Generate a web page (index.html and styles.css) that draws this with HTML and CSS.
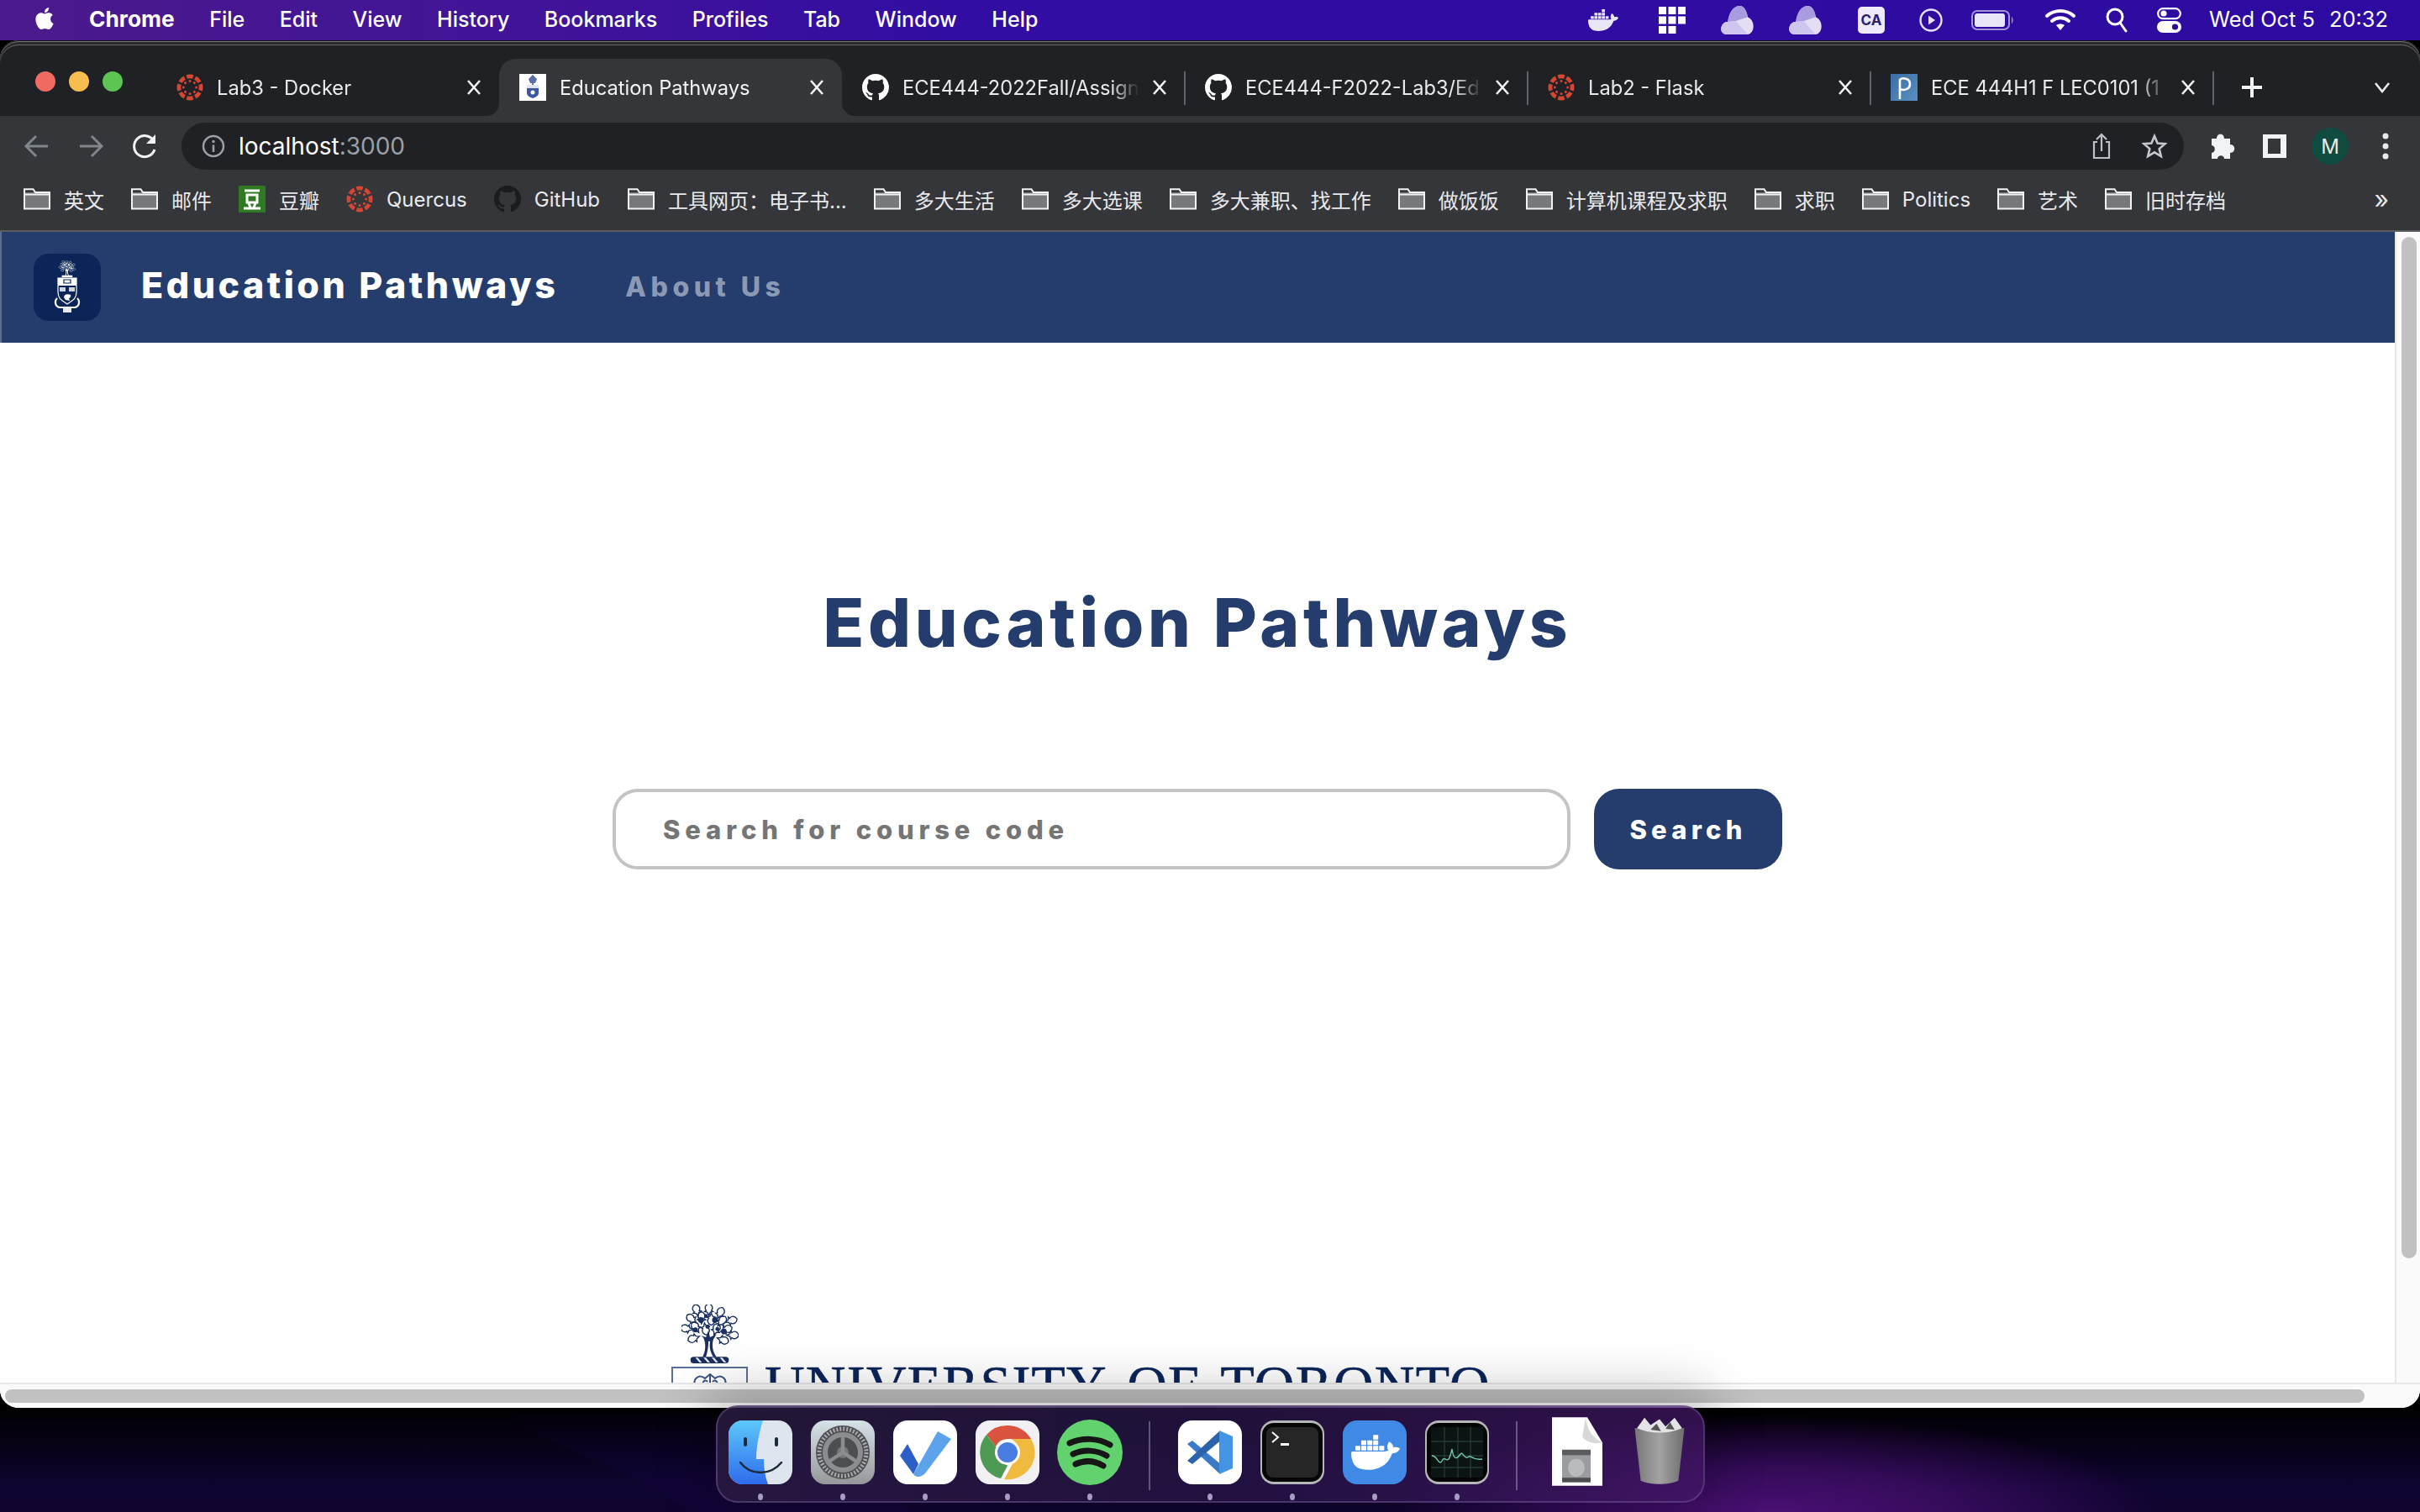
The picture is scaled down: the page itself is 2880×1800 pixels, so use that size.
FILE: index.html
```html
<!DOCTYPE html>
<html lang="en">
<head>
<meta charset="utf-8">
<title>Education Pathways</title>
<link rel="stylesheet" href="styles.css">
</head>
<body>
<svg class="defs" width="0" height="0">
  <defs>
    <symbol id="canvas" viewBox="0 0 32 32">
      <g fill="#d64635">
        <g id="cw"><path d="M11.6 1.2A15.4 15.4 0 0 1 20.4 1.2L19 5.8A10.6 10.6 0 0 0 13 5.8Z"/><circle cx="16" cy="8.4" r="1.5"/></g>
        <use href="#cw" transform="rotate(45 16 16)"/><use href="#cw" transform="rotate(90 16 16)"/><use href="#cw" transform="rotate(135 16 16)"/>
        <use href="#cw" transform="rotate(180 16 16)"/><use href="#cw" transform="rotate(225 16 16)"/><use href="#cw" transform="rotate(270 16 16)"/><use href="#cw" transform="rotate(315 16 16)"/>
      </g>
    </symbol>
    <symbol id="github" viewBox="0 0 16 16">
      <path fill="currentColor" d="M8 0C3.58 0 0 3.58 0 8c0 3.54 2.29 6.53 5.47 7.59.4.07.55-.17.55-.38 0-.19-.01-.82-.01-1.49-2.01.37-2.53-.49-2.69-.94-.09-.23-.48-.94-.82-1.13-.28-.15-.68-.52-.01-.53.63-.01 1.08.58 1.23.82.72 1.21 1.87.87 2.33.66.07-.52.28-.87.51-1.07-1.78-.2-3.64-.89-3.64-3.95 0-.87.31-1.59.82-2.15-.08-.2-.36-1.02.08-2.12 0 0 .67-.21 2.2.82.64-.18 1.32-.27 2-.27.68 0 1.36.09 2 .27 1.53-1.04 2.2-.82 2.2-.82.44 1.1.16 1.92.08 2.12.51.56.82 1.27.82 2.15 0 3.07-1.87 3.75-3.65 3.95.29.25.54.73.54 1.48 0 1.07-.01 1.93-.01 2.2 0 .21.15.46.55.38A8.013 8.013 0 0016 8c0-4.42-3.58-8-8-8z"/>
    </symbol>
    <symbol id="folder" viewBox="0 0 32 26">
      <path d="M1 5H30.5V25H1Z" fill="#77787b"/>
      <path d="M1 24.4V1.2H11.5L14 5H31V24.4Z M1 7.4H31" fill="none" stroke="#f1f3f4" stroke-width="2"/>
    </symbol>
    <symbol id="close" viewBox="0 0 18 20">
      <path d="M2 2L16 18M16 2L2 18" fill="none" stroke="#f1f3f4" stroke-width="2.600"/>
    </symbol>
    <symbol id="whale" viewBox="0 0 24 24">
      <path fill="currentColor" d="M13.983 11.078h2.119a.186.186 0 00.186-.185V9.006a.186.186 0 00-.186-.186h-2.119a.185.185 0 00-.185.185v1.888c0 .102.083.185.185.185m-2.954-5.43h2.118a.186.186 0 00.186-.186V3.574a.186.186 0 00-.186-.185h-2.118a.185.185 0 00-.185.185v1.888c0 .102.082.185.185.186m0 2.716h2.118a.187.187 0 00.186-.186V6.29a.186.186 0 00-.186-.185h-2.118a.185.185 0 00-.185.185v1.887c0 .102.082.185.185.186m-2.93 0h2.12a.186.186 0 00.184-.186V6.29a.185.185 0 00-.185-.185H8.1a.185.185 0 00-.185.185v1.887c0 .102.083.185.185.186m-2.964 0h2.119a.186.186 0 00.185-.186V6.29a.185.185 0 00-.185-.185H5.136a.186.186 0 00-.186.185v1.887c0 .102.084.185.186.186m5.893 2.715h2.118a.186.186 0 00.186-.185V9.006a.186.186 0 00-.186-.186h-2.118a.185.185 0 00-.185.185v1.888c0 .102.082.185.185.185m-2.93 0h2.12a.185.185 0 00.184-.185V9.006a.185.185 0 00-.184-.186h-2.12a.185.185 0 00-.184.185v1.888c0 .102.083.185.185.185m-2.964 0h2.119a.185.185 0 00.185-.185V9.006a.185.185 0 00-.184-.186h-2.12a.186.186 0 00-.186.186v1.887c0 .102.084.185.186.185m-2.92 0h2.12a.185.185 0 00.184-.185V9.006a.185.185 0 00-.184-.186h-2.12a.185.185 0 00-.184.185v1.888c0 .102.082.185.185.185M23.763 9.89c-.065-.051-.672-.51-1.954-.51-.338.001-.676.03-1.01.087-.248-1.7-1.653-2.53-1.716-2.566l-.344-.199-.226.327c-.284.438-.49.922-.612 1.43-.23.97-.09 1.882.403 2.661-.595.332-1.55.413-1.744.42H.751a.751.751 0 00-.75.748 11.376 11.376 0 00.692 4.062c.545 1.428 1.355 2.48 2.41 3.124 1.18.723 3.1 1.137 5.275 1.137.983.003 1.963-.086 2.93-.266a12.248 12.248 0 003.823-1.389c.98-.567 1.86-1.288 2.61-2.136 1.252-1.418 1.998-2.997 2.553-4.4h.221c1.372 0 2.215-.549 2.68-1.009.309-.293.55-.65.707-1.046l.098-.288Z"/>
    </symbol>
    <symbol id="cloud" viewBox="0 0 42 40">
      <path d="M8 38C2 38 0 33 1 29C2 24 6 22 9 22C11 9 17 2 24 2C30 2 33 9 34 16C39 18 42 24 41 30C40 35 37 38 33 38Z" fill="#e4def5"/>
      <path d="M9 22C11 9 17 2 24 2C30 2 33 9 34 16L19 21Z" fill="#a99be0"/>
      <path d="M9 22L19 21L34 38H8C2 38 0 33 1 29C2 24 6 22 9 22Z" fill="#cfc6ee"/>
    </symbol>
    <symbol id="leaf" viewBox="-4.600 -4.600 9.200 9.200" overflow="visible">
      <path d="M0-5.400C2.800-4.600 4.200-1.600 2.200 0.600L3.600 1.400 1.200 2.200 0 5 -1.200 2.200 -3.600 1.400 -2.200 .6C-4.200-1.600-2.800-4.600 0-5.400Z" fill="none" stroke="currentColor" stroke-width="1"/>
    </symbol>
    <symbol id="tree" viewBox="0 0 70 72">
      <use href="#leaf" x="12" y="1" width="13" height="13" transform="rotate(-15 18 7)"/>
      <use href="#leaf" x="27" y="0" width="13" height="13"/>
      <use href="#leaf" x="41" y="4" width="13" height="13" transform="rotate(25 47 10)"/>
      <use href="#leaf" x="6" y="12" width="13" height="13" transform="rotate(-50 12 18)"/>
      <use href="#leaf" x="18" y="10" width="13" height="13"/>
      <use href="#leaf" x="31" y="12" width="13" height="13" transform="rotate(180 37 18)"/>
      <use href="#leaf" x="43" y="14" width="13" height="13" transform="rotate(40 49 20)"/>
      <use href="#leaf" x="55" y="13" width="13" height="13" transform="rotate(75 61 19)"/>
      <use href="#leaf" x="0" y="24" width="13" height="13" transform="rotate(-80 6 30)"/>
      <use href="#leaf" x="11" y="22" width="13" height="13" transform="rotate(-30 17 28)"/>
      <use href="#leaf" x="24" y="24" width="13" height="13" transform="rotate(170 30 30)"/>
      <use href="#leaf" x="36" y="24" width="13" height="13" transform="rotate(20 42 30)"/>
      <use href="#leaf" x="49" y="24" width="13" height="13" transform="rotate(70 55 30)"/>
      <use href="#leaf" x="57" y="31" width="13" height="13" transform="rotate(90 63 37)"/>
      <use href="#leaf" x="9" y="36" width="13" height="13" transform="rotate(-110 15 42)"/>
      <use href="#leaf" x="45" y="37" width="13" height="13" transform="rotate(110 51 43)"/>
      <g fill="currentColor">
        <circle cx="24" cy="19" r="3.500"/><circle cx="41" cy="19" r="3.500"/><circle cx="17" cy="31" r="3"/><circle cx="52" cy="33" r="3.500"/><circle cx="32" cy="27" r="2.600"/><circle cx="30" cy="14" r="2.400"/><circle cx="44" cy="30" r="2.400"/>
        <path d="M26 64C30 56 30 48 27 41L24 38 30 40 33 32 35 40 43 36 39 43C37 50 38 58 43 64H39C35 58 34 52 35 45H33C33 52 32 58 30 64Z"/>
        <rect x="11" y="64" width="47" height="8" rx="4"/>
      </g>
      <path fill="#fff" opacity=".9" d="M20 65l5 6h-3l-5-6ZM30 65l5 6h-3l-5-6ZM40 65l5 6h-3l-5-6ZM50 65l5 6h-3l-5-6Z"/>
    </symbol>
  </defs>
</svg>

<svg class="wallpaper" width="2880" height="124" viewBox="0 0 2880 124">
  <defs>
    <linearGradient id="wp" x1="0" y1="0" x2="0" y2="1"><stop offset="0" stop-color="#12043a" stop-opacity="0"/><stop offset="1" stop-color="#12043a" stop-opacity=".9"/></linearGradient>
  </defs>
  <path d="M620 22C700 60 780 90 820 124H1090L900 0H600Z" fill="url(#wp)" opacity=".8"/>
</svg>

<header class="menubar">
  <svg class="apple" viewBox="0 0 24 24" width="26" height="30"><path fill="#fff" d="M12.152 6.896c-.948 0-2.415-1.078-3.96-1.040-2.040.027-3.910 1.183-4.961 3.014-2.117 3.675-.546 9.103 1.519 12.090 1.013 1.454 2.208 3.090 3.792 3.039 1.520-.065 2.090-.987 3.935-.987 1.831 0 2.350.987 3.960.948 1.637-.026 2.676-1.480 3.676-2.948 1.156-1.688 1.636-3.325 1.662-3.415-.039-.013-3.182-1.221-3.220-4.857-.026-3.040 2.480-4.494 2.597-4.559-1.429-2.090-3.623-2.324-4.390-2.376-2-.156-3.675 1.090-4.610 1.090zM15.530 3.830c.843-1.012 1.400-2.427 1.245-3.830-1.207.052-2.662.805-3.532 1.818-.780.896-1.454 2.338-1.273 3.714 1.338.104 2.715-.688 3.559-1.701"/></svg>
  <nav class="menus">
    <span class="app">Chrome</span><span>File</span><span>Edit</span><span>View</span><span>History</span><span>Bookmarks</span><span>Profiles</span><span>Tab</span><span>Window</span><span>Help</span>
  </nav>
  <div class="status">
    <svg class="st-docker" width="36" height="36"><use href="#whale" color="#e9e6f8"/></svg>
    <svg class="st-grid" width="32" height="32" viewBox="0 0 32 32" fill="#fff"><path d="M0 0h9v9H0zM11.500 0h9v9h-9zM23 0h9v9h-9zM0 11.500h9v9H0zM11.500 11.500h9v9h-9zM23 11.500h9v9h-9zM0 23h9v9H0zM11.500 23h9v9h-9z"/></svg>
    <svg class="st-cloud1" width="41" height="38"><use href="#cloud"/></svg>
    <svg class="st-cloud2" width="41" height="38"><use href="#cloud"/></svg>
    <svg class="st-ca" width="32" height="32" viewBox="0 0 32 32"><rect width="32" height="32" rx="5" fill="#eee9fb"/><text x="16" y="22" text-anchor="middle" class="ca-text">CA</text></svg>
    <svg class="st-play" width="28" height="28" viewBox="0 0 28 28"><circle cx="14" cy="14" r="12.500" fill="none" stroke="#e6e1f7" stroke-width="2.400"/><path d="M11 8.500L19 14 11 19.500Z" fill="#e6e1f7"/></svg>
    <svg class="st-batt" width="51" height="24" viewBox="0 0 51 24"><rect x="1" y="1" width="44" height="22" rx="6" fill="none" stroke="#9f94d6" stroke-width="2"/><rect x="4" y="4" width="36" height="16" rx="3" fill="#e9e6f8"/><path d="M48 8c2 1 2 7 0 8Z" fill="#9f94d6"/></svg>
    <svg class="st-wifi" width="40" height="30" viewBox="0 0 40 30" fill="none" stroke="#fff" stroke-width="4" stroke-linecap="round"><path d="M4 10C13 2 27 2 36 10M10 16C16 11 24 11 30 16"/><path d="M15 21C18 19 22 19 25 21L20 27Z" fill="#fff" stroke="none"/></svg>
    <svg class="st-search" width="27" height="30" viewBox="0 0 27 30" fill="none" stroke="#fff" stroke-width="3"><circle cx="11" cy="11" r="9"/><path d="M17 18L24 28" stroke-linecap="round"/></svg>
    <svg class="st-ctrl" width="29" height="30" viewBox="0 0 29 30"><rect x="1.200" y="1.200" width="26.600" height="12" rx="6" fill="none" stroke="#fff" stroke-width="2.200"/><circle cx="8" cy="7" r="3.600" fill="#fff"/><rect y="16" width="29" height="14" rx="7" fill="#fff"/><circle cx="21.500" cy="23" r="3.600" fill="#2d0aa0"/></svg>
    <time class="clock"><span>Wed Oct 5</span><span>20:32</span></time>
  </div>
</header>

<div class="window">
  <div class="tabstrip">
    <div class="lights"><i class="red"></i><i class="yellow"></i><i class="green"></i></div>
    <div class="tab">
      <svg class="fav" width="32" height="32"><use href="#canvas"/></svg>
      <span class="tab-title">Lab3 - Docker</span><svg class="x" width="18" height="20"><use href="#close"/></svg>
    </div>
    <div class="tab active">
      <svg class="fav" width="32" height="32" viewBox="0 0 32 32"><rect width="32" height="32" fill="#fff"/><path d="M16 1l5 5-2 5h-6l-2-5Z" fill="#5a6ea8"/><rect x="15" y="10" width="2" height="3" fill="#5a6ea8"/><path d="M9 13h14v10c0 3-4 5-7 6-3-1-7-3-7-6Z" fill="#3d57a0"/><rect x="9" y="13" width="14" height="4" fill="#dfe4f1"/><circle cx="16" cy="22" r="2.500" fill="#fff"/></svg>
      <span class="tab-title">Education Pathways</span><svg class="x" width="18" height="20"><use href="#close"/></svg>
    </div>
    <div class="tab">
      <svg class="fav gh" width="32" height="32"><use href="#github"/></svg>
      <span class="tab-title">ECE444-2022Fall/Assign</span><svg class="x" width="18" height="20"><use href="#close"/></svg>
    </div>
    <div class="tab sep">
      <svg class="fav gh" width="32" height="32"><use href="#github"/></svg>
      <span class="tab-title">ECE444-F2022-Lab3/Ed</span><svg class="x" width="18" height="20"><use href="#close"/></svg>
    </div>
    <div class="tab sep">
      <svg class="fav" width="32" height="32"><use href="#canvas"/></svg>
      <span class="tab-title">Lab2 - Flask</span><svg class="x" width="18" height="20"><use href="#close"/></svg>
    </div>
    <div class="tab sep">
      <svg class="fav" width="32" height="32" viewBox="0 0 32 32"><defs><linearGradient id="pz" x1="0" y1="0" x2="1" y2="1"><stop offset="0" stop-color="#3b6ea5"/><stop offset="1" stop-color="#5a8fc0"/></linearGradient></defs><rect width="32" height="32" fill="url(#pz)"/><path d="M11 30V7C14 4 23 5 23 12S14 20 12 18" fill="none" stroke="#fff" stroke-width="2.600"/></svg>
      <span class="tab-title">ECE 444H1 F LEC0101 (1</span><svg class="x" width="18" height="20"><use href="#close"/></svg>
    </div>
    <div class="tab-end sep-end">
      <svg class="plus" width="28" height="28" viewBox="0 0 28 28" fill="none" stroke="#f1f3f4" stroke-width="4"><path d="M14 2V26M2 14H26"/></svg>
      <svg class="chev" width="20" height="14" viewBox="0 0 20 14" fill="none" stroke="#e8eaed" stroke-width="2.600"><path d="M2 2L10 12 18 2"/></svg>
    </div>
  </div>

  <div class="toolbar">
    <svg width="40" height="40" viewBox="0 0 40 40" fill="none" stroke="#80868b" stroke-width="3"><path d="M33 20H7M19 8L7 20 19 32"/></svg>
    <svg width="40" height="40" viewBox="0 0 40 40" fill="none" stroke="#80868b" stroke-width="3"><path d="M7 20H33M21 8L33 20 21 32"/></svg>
    <svg width="40" height="40" viewBox="0 0 40 40" fill="none"><path d="M31 14A12.500 12.500 0 1 0 32 24" stroke="#f1f3f4" stroke-width="3"/><path d="M33 6V17H22Z" fill="#f1f3f4"/></svg>
    <div class="omnibox">
      <svg width="28" height="28" viewBox="0 0 28 28" fill="none"><circle cx="14" cy="14" r="12" stroke="#9aa0a6" stroke-width="2.500"/><path d="M14 12.500V21" stroke="#9aa0a6" stroke-width="2.600"/><circle cx="14" cy="8.500" r="1.700" fill="#9aa0a6"/></svg>
      <div class="url">localhost<span>:3000</span></div>
      <svg class="share" width="24" height="32" viewBox="0 0 24 32" fill="none" stroke="#bdc1c6" stroke-width="2.200"><path d="M7 11H3V30H21V11H17M12 22V2M6 8L12 2 18 8"/></svg>
      <svg class="star" width="30" height="30" viewBox="0 0 30 30" fill="none" stroke="#c4c7cb" stroke-width="2.600"><path d="M15 3L18.600 11.500 27.500 12.200 20.700 18.100 22.800 27 15 22.300 7.200 27 9.300 18.100 2.500 12.200 11.400 11.500Z"/></svg>
    </div>
    <svg width="40" height="40" viewBox="0 0 40 40"><path fill="#f1f3f4" d="M9 11H15C15 4 24 4 24 11H31V18C38 18 38 28 31 28V35H24C24 30 16 30 16 35H9V28C14 28 14 19 9 19Z"/></svg>
    <svg width="40" height="40" viewBox="0 0 40 40"><path fill="#f1f3f4" fill-rule="evenodd" d="M6 6H34V34H6ZM12 11V29H27V11Z"/></svg>
    <div class="avatar">M</div>
    <svg width="40" height="40" viewBox="0 0 40 40" fill="#e8eaed"><circle cx="20" cy="8" r="3.500"/><circle cx="20" cy="20" r="3.500"/><circle cx="20" cy="32" r="3.500"/></svg>
  </div>

  <div class="bookmarks">
    <span class="bm"><svg width="32" height="26"><use href="#folder"/></svg>英文</span>
    <span class="bm"><svg width="32" height="26"><use href="#folder"/></svg>邮件</span>
    <span class="bm"><svg width="32" height="32" viewBox="0 0 32 32"><rect width="32" height="32" rx="1" fill="#2f7a22"/><path d="M7 6H25M10 11H22V20H10ZM12 21L14 26M20 21L18 26M6 27H26" fill="none" stroke="#fff" stroke-width="3"/></svg>豆瓣</span>
    <span class="bm"><svg width="32" height="32"><use href="#canvas"/></svg>Quercus</span>
    <span class="bm bm-gh"><svg class="gh-dark" width="32" height="32"><use href="#github"/></svg>GitHub</span>
    <span class="bm"><svg width="32" height="26"><use href="#folder"/></svg>工具网页：电子书...</span>
    <span class="bm"><svg width="32" height="26"><use href="#folder"/></svg>多大生活</span>
    <span class="bm"><svg width="32" height="26"><use href="#folder"/></svg>多大选课</span>
    <span class="bm"><svg width="32" height="26"><use href="#folder"/></svg>多大兼职、找工作</span>
    <span class="bm"><svg width="32" height="26"><use href="#folder"/></svg>做饭饭</span>
    <span class="bm"><svg width="32" height="26"><use href="#folder"/></svg>计算机课程及求职</span>
    <span class="bm"><svg width="32" height="26"><use href="#folder"/></svg>求职</span>
    <span class="bm"><svg width="32" height="26"><use href="#folder"/></svg>Politics</span>
    <span class="bm"><svg width="32" height="26"><use href="#folder"/></svg>艺术</span>
    <span class="bm"><svg width="32" height="26"><use href="#folder"/></svg>旧时存档</span>
    <span class="more">»</span>
  </div>

  <div class="viewport">
    <div class="page">
      <div class="site-nav">
        <div class="site-logo">
          <svg width="44" height="64" viewBox="0 0 44 64">
            <svg x="8" y="0" width="28" height="20" class="tree-white"><use href="#tree"/></svg>
            <path d="M11 21H33V38C33 46 28 48 22 52C16 48 11 46 11 38Z" fill="none" stroke="#fff" stroke-width="1.200"/>
            <rect x="11" y="21" width="22" height="9" fill="#fff"/>
            <path d="M18 23h8v4H18Z" fill="none" stroke="#0b2559" stroke-width="1.200"/>
            <rect x="13" y="32" width="7" height="5" fill="#fff" opacity=".8"/><rect x="24" y="32" width="7" height="5" fill="#fff" opacity=".8"/>
            <path d="M18 44C18 41 22 39 26 41C27 43 25 45 24 45L25 48 20 47Z" fill="#fff"/>
            <path d="M10 45C6 49 8 55 13 56H31C36 55 38 49 34 45" fill="none" stroke="#fff" stroke-width="2"/>
            <rect x="17" y="56" width="10" height="6" fill="#e6e9f0"/>
          </svg>
        </div>
        <a class="brand">Education Pathways</a>
        <a class="nav-link">About Us</a>
      </div>
      <main class="hero">
        <h1>Education Pathways</h1>
        <form class="search">
          <input class="search-input" type="text" placeholder="Search for course code">
          <button class="search-btn" type="button">Search</button>
        </form>
        <div class="uoft">
          <div class="crest">
            <svg class="crest-tree" width="68" height="70"><use href="#tree"/></svg>
            <div class="crest-box">
              <svg width="40" height="16" viewBox="0 0 40 16" fill="none" stroke="#3b5180" stroke-width="2"><path d="M3 18C-2 8 8 2 14 8L20 3 26 8C32 2 42 8 37 18"/><path d="M12 18C10 12 14 8 17 12M28 18C30 12 26 8 23 12M20 3V18"/></svg>
            </div>
          </div>
          <div class="uoft-name">UNIVERSITY OF TORONTO</div>
        </div>
      </main>
    </div>
    <div class="vscroll"><div class="vthumb"></div></div>
    <div class="hscroll"><div class="hthumb"></div></div>
  </div>
</div>

<footer class="dock">
  <div class="dock-item">
    <svg class="ico" viewBox="0 0 76 76"><defs><linearGradient id="fb" x1="0" y1="0" x2="0" y2="1"><stop offset="0" stop-color="#5cc8fa"/><stop offset="1" stop-color="#2f6bec"/></linearGradient></defs><rect width="76" height="76" rx="17" fill="#dfe5ef"/><path d="M17 0H41C36 16 33 32 33 46H42C42 56 43 66 47 76H17C8 76 0 68 0 59V17C0 8 8 0 17 0Z" fill="url(#fb)"/><rect x="18" y="20" width="4" height="11" rx="2" fill="#1d2a3a"/><rect x="55" y="20" width="4" height="11" rx="2" fill="#1d2a3a"/><path d="M14 50C26 66 50 66 63 50" fill="none" stroke="#1d2a3a" stroke-width="2.500" stroke-linecap="round"/></svg><i class="dot"></i>
  </div>
  <div class="dock-item">
    <svg class="ico" viewBox="0 0 76 76"><defs><linearGradient id="sp" x1="0" y1="0" x2="0" y2="1"><stop offset="0" stop-color="#d5e2e8"/><stop offset="1" stop-color="#96979a"/></linearGradient></defs><rect width="76" height="76" rx="17" fill="url(#sp)"/><circle cx="38" cy="38" r="32" fill="#4d4e50"/><circle cx="38" cy="38" r="28" fill="none" stroke="#a9aaad" stroke-width="5" stroke-dasharray="2 2"/><circle cx="38" cy="38" r="21" fill="none" stroke="#8c8d90" stroke-width="6"/><circle cx="38" cy="38" r="7" fill="#77787b"/><path d="M38 38V17M38 38L20 50M38 38L56 50" stroke="#8c8d90" stroke-width="4.500"/></svg><i class="dot"></i>
  </div>
  <div class="dock-item">
    <svg class="ico" viewBox="0 0 76 76"><rect width="76" height="76" rx="17" fill="#fff"/><path d="M8 42L17 28 30 52 24 64Z" fill="#2b5fc7"/><path d="M24 64L53 13 69 22 38 63C33 68 27 68 24 64Z" fill="#5da3ec"/></svg><i class="dot"></i>
  </div>
  <div class="dock-item">
    <svg class="ico" viewBox="0 0 76 76"><rect width="76" height="76" rx="17" fill="#f1f1f3"/><circle cx="38" cy="38" r="32" fill="#fff"/><path d="M38 6A32 32 0 0 1 66 22H38A16 16 0 0 0 24 31L13 17A32 32 0 0 1 38 6Z" fill="#d9533f"/><path d="M13 17L24 31 38 54 30 69A32 32 0 0 1 13 17Z" fill="#4e9a54"/><path d="M66 22A32 32 0 0 1 34 70L45 50 52 38C52 31 48 25 42 22Z" fill="#f0b93f"/><circle cx="38" cy="38" r="15" fill="#fff"/><circle cx="38" cy="38" r="12" fill="#4a7de2"/></svg><i class="dot"></i>
  </div>
  <div class="dock-item">
    <svg class="ico spot" viewBox="0 0 76 76"><circle cx="38" cy="38" r="39" fill="#62d26f"/><path d="M14 27C30 20 48 21 62 29M18 40C31 34 46 35 58 42M21 52C32 47 44 48 54 54" fill="none" stroke="#161616" stroke-width="7" stroke-linecap="round"/></svg><i class="dot"></i>
  </div>
  <div class="dock-sep"></div>
  <div class="dock-item">
    <svg class="ico" viewBox="0 0 76 76"><rect width="76" height="76" rx="17" fill="#fff"/><path d="M11 28L17 24 53 54V61L49 63Z" fill="#3a7bc8"/><path d="M11 48L17 52 53 22V15L49 13Z" fill="#2b63ab"/><path d="M49 12L65 19V57L49 64Z" fill="#4394e4"/></svg><i class="dot"></i>
  </div>
  <div class="dock-item">
    <svg class="ico" viewBox="0 0 76 76"><rect width="76" height="76" rx="16" fill="#b5b7b9"/><rect x="2" y="3" width="72" height="70" rx="14" fill="#060606"/><rect x="7" y="8" width="62" height="60" rx="8" fill="#262626"/><path d="M14 14L21 20 14 26" fill="none" stroke="#fff" stroke-width="2"/><rect x="24" y="27" width="10" height="3" fill="#fff"/></svg><i class="dot"></i>
  </div>
  <div class="dock-item">
    <svg class="ico dock-whale" viewBox="0 0 76 76"><rect width="76" height="76" rx="17" fill="#408ae6"/><svg x="10" y="9" width="58" height="58"><use href="#whale" color="#fff"/></svg></svg><i class="dot"></i>
  </div>
  <div class="dock-item">
    <svg class="ico" viewBox="0 0 76 76"><rect width="76" height="76" rx="16" fill="#b5b7b9"/><rect x="2" y="3" width="72" height="70" rx="14" fill="#050505"/><rect x="7" y="8" width="62" height="60" fill="#0b1412"/><path d="M23 8V68M39 8V68M54 8V68M7 25H69M7 42H69M7 56H69" stroke="#2a4a42" stroke-width="1"/><path d="M8 42C14 42 15 50 18 50C21 50 20 44 24 46C27 48 29 48 32 34C34 48 38 46 42 40C45 36 47 48 52 43C55 41 56 48 68 46" fill="none" stroke="#6fc8ae" stroke-width="1.400"/></svg><i class="dot"></i>
  </div>
  <div class="dock-sep"></div>
  <div class="dock-item">
    <svg class="doc" viewBox="8 0 60 80" preserveAspectRatio="none"><path d="M8 2H50L68 30V78H8Z" fill="#fff"/><path d="M48 2C50 14 54 24 68 30C58 32 50 30 44 24Z" fill="#d8d8d8"/><rect x="20" y="38" width="34" height="36" fill="#9a9c9f"/><rect x="20" y="38" width="34" height="6" fill="#5b5d60"/><circle cx="37" cy="58" r="10" fill="#b9bbbe"/><rect x="20" y="69" width="34" height="5" fill="#4d4f52"/></svg>
  </div>
  <div class="dock-item">
    <svg class="trash" viewBox="0 0 76 88"><defs><linearGradient id="tr" x1="0" y1="0" x2="1" y2="0"><stop offset="0" stop-color="#777"/><stop offset=".5" stop-color="#a3a3a3"/><stop offset="1" stop-color="#6d6d6d"/></linearGradient></defs><path d="M5 14H71L63 84C50 90 26 90 13 84Z" fill="url(#tr)"/><path d="M8 14L18 0 26 10 38 2 46 12 58 0 68 14C50 22 26 22 8 14Z" fill="#e4e4e6"/><path d="M26 16L34 8 40 18ZM46 15L52 6 58 16Z" fill="#555"/></svg>
  </div>
</footer>
</body>
</html>
```
FILE: styles.css
```css
* { box-sizing: border-box; }
html, body { margin: 0; padding: 0; }
body {
  width: 2880px;
  height: 1800px;
  overflow: hidden;
  position: relative;
  font-family: "Inter", "Noto Sans CJK SC", sans-serif;
  background:
    radial-gradient(ellipse 460px 125px at 2110px 1810px, #4c1076 0%, rgba(76,16,118,.6) 50%, rgba(76,16,118,0) 100%),
    linear-gradient(to bottom, #000 1676px, #0f0430 1770px, #10042f 1800px);
}
.defs { position: absolute; }
.wallpaper { position: absolute; left: 0; bottom: 0; }

/* macOS menu bar */
.menubar {
  position: relative;
  height: 48px;
  display: flex;
  align-items: center;
  color: #fff;
  background: linear-gradient(to right, #4b1a8c 0%, #3f129a 25%, #310da3 40%, #2d0aa0 100%);
  padding-left: 40px;
  padding-right: 38px;
}
.apple { flex: none; margin-bottom: 4px; }
.menus { display: flex; gap: 41.500px; margin-left: 40px; padding-bottom: 3px; font-size: 25px; font-weight: 500; align-items: baseline; }
.menus .app { font-weight: 700; font-size: 26.300px; }
.status { margin-left: auto; display: flex; align-items: center; gap: 34px; }
.st-grid { margin-left: 14px; }
.st-cloud1 { margin-left: 7px; }
.st-cloud2 { margin-left: 6px; }
.st-ca { margin-left: 8px; }
.st-play { margin-left: 7px; }
.st-wifi { margin-left: 1px; }
.ca-text { font: 700 17px "Inter", sans-serif; fill: #2d1f6e; }
.clock { display: flex; gap: 17px; font-size: 25.400px; margin-left: -1px; padding-bottom: 3px; }

/* browser window */
.window {
  position: relative;
  height: 1628px;
  border-radius: 22px;
  overflow: hidden;
  display: flex;
  flex-direction: column;
  background: #202124;
  box-shadow: inset 0 1px 0 #111, inset 0 2px 0 #777, inset 0 5px 0 #28292c, inset 0 6px 0 #666;
}
.tabstrip { height: 90px; flex: none; display: flex; align-items: flex-end; }
.lights { width: 186px; align-self: flex-start; margin-top: 37px; padding-left: 42px; display: flex; gap: 16px; flex: none; }
.lights i { width: 24px; height: 24px; border-radius: 50%; display: block; }
.red { background: #f16a5f; }
.yellow { background: #f6bd4f; }
.green { background: #5dc552; }
.tab {
  position: relative;
  width: 408px;
  height: 68px;
  flex: none;
  display: flex;
  align-items: center;
  padding-left: 24px;
  color: #e8eaed;
  font-size: 23.700px;
}
.tab.active { background: #35363a; border-radius: 20px 20px 0 0; color: #f1f3f4; }
.tab.active::before, .tab.active::after {
  content: "";
  position: absolute;
  bottom: 0;
  width: 16px;
  height: 16px;
}
.tab.active::before { left: -16px; background: radial-gradient(circle at 0 0, transparent 16px, #35363a 16.500px); }
.tab.active::after { right: -16px; background: radial-gradient(circle at 100% 0, transparent 16px, #35363a 16.500px); }
.tab.sep::before, .tab-end::before {
  content: "";
  position: absolute;
  left: -1px;
  top: 15px;
  height: 40px;
  width: 2px;
  background: #5f6368;
}
.fav { flex: none; margin-right: 16px; }
.gh { color: #fff; }
.tab-title {
  width: 282px;
  flex: none;
  white-space: nowrap;
  overflow: hidden;
  -webkit-mask-image: linear-gradient(to right, #000 88%, transparent 100%);
  mask-image: linear-gradient(to right, #000 88%, transparent 100%);
}
.x { flex: none; margin-left: 15px; }
.tab-end {
  position: relative;
  flex: 1;
  height: 68px;
  display: flex;
  align-items: center;
  padding-left: 32px;
  padding-right: 35px;
  justify-content: space-between;
}

.toolbar {
  flex: none;
  height: 68px;
  background: #35363a;
  display: flex;
  align-items: center;
  gap: 24px;
  padding: 4px 24px 0;
}
.toolbar > svg { flex: none; }
.omnibox {
  flex: none;
  width: 2383px;
  height: 56px;
  background: #202124;
  border-radius: 28px;
  display: flex;
  align-items: center;
  padding: 0 20px 0 24px;
}
.url { font-size: 28px; color: #fff; margin-left: 16px; flex: 1; }
.url span { color: #9aa0a6; }
.star { margin-left: 36px; }
.avatar {
  flex: none;
  width: 44px;
  height: 44px;
  border-radius: 50%;
  background: #0f4c3f;
  color: #e8eaed;
  font-size: 24px;
  display: flex;
  align-items: center;
  justify-content: center;
}

.bookmarks {
  flex: none;
  height: 70px;
  background: #35363a;
  border-bottom: 2px solid #5b5c5e;
  padding: 0 37px 6px 28px;
  display: flex;
  align-items: center;
  gap: 32px;
  color: #e8eaed;
  font-size: 24px;
}
.bm { display: flex; align-items: center; gap: 16px; white-space: nowrap; }
.bm svg { flex: none; }
.bm-gh { margin-right: 1px; }
.gh-dark { color: #1b1c1e; }
.more { margin-left: auto; font-size: 30px; line-height: 1; }

.viewport {
  flex: 1;
  min-height: 0;
  background: #fff;
  display: grid;
  grid-template-columns: 1fr 30px;
  grid-template-rows: 1fr 30px;
}
.page { min-height: 0; min-width: 0; display: flex; flex-direction: column; overflow: hidden; }
.site-nav {
  flex: none;
  height: 132px;
  background: #253d6c;
  border-left: 2px solid #5e6d8c;
  display: flex;
  align-items: center;
  padding-left: 38px;
}
.site-logo {
  width: 80px;
  height: 80px;
  border-radius: 18px;
  background: #0b2559;
  display: flex;
  align-items: center;
  justify-content: center;
}
.tree-white { color: #fff; }
.brand { margin-left: 48px; padding-bottom: 7px; font: 800 43px "Inter", sans-serif; letter-spacing: 3.500px; color: #fff; }
.nav-link { margin-left: 80px; padding-bottom: 2px; font: 800 32px "Inter", sans-serif; letter-spacing: 5.500px; color: #8c99b5; }

.hero { flex: 1; min-height: 0; display: flex; flex-direction: column; align-items: center; padding-top: 283px; }
.hero h1 { margin: 0; flex: none; font: 800 80px/100px "Inter", sans-serif; letter-spacing: 4.700px; color: #253d6c; }
.search { flex: none; margin-top: 148px; display: flex; gap: 28px; }
.search-input {
  width: 1140px;
  height: 96px;
  border: 4px solid #c4c4c4;
  border-radius: 30px;
  background: #fff;
  padding: 0 56px;
  font: 800 31px "Inter", sans-serif;
  letter-spacing: 5.800px;
  outline: none;
}
.search-input::placeholder { color: #757575; opacity: 1; }
.search-btn {
  width: 224px;
  height: 96px;
  border: 0;
  border-radius: 30px;
  background: #253d6c;
  color: #fff;
  font: 800 31px "Inter", sans-serif;
  letter-spacing: 5.200px;
}
.uoft { flex: none; align-self: flex-start; margin-top: 518px; margin-left: 799px; display: flex; align-items: flex-start; color: #0b2559; }
.crest { width: 91px; display: flex; flex-direction: column; align-items: center; color: #1a2f5e; }
.crest-tree { flex: none; display: block; }
.crest-box { width: 91px; height: 40px; margin-top: 4px; border: 2px solid #5a6f95; border-bottom: 0; display: flex; justify-content: center; padding-top: 4px; }
.uoft-name {
  margin-left: 20px;
  margin-top: 63px;
  font: 400 66px/1 "Liberation Serif", serif;
  letter-spacing: 1.200px;
  word-spacing: 8px;
  -webkit-text-stroke: .6px #0b2559;
  white-space: nowrap;
  color: #0b2559;
}

.vscroll { background: #fafafa; border-left: 2px solid #e8e8e8; padding: 6px 4px 0 6px; }
.vthumb { height: 1216px; background: #c1c1c1; border-radius: 9px; }
.hscroll { grid-column: 1 / 3; background: #fafafa; border-top: 2px solid #e8e8e8; padding: 6px 0 0 6px; }
.hthumb { width: 2808px; height: 16px; background: #c1c1c1; border-radius: 8px; }

/* dock */
.dock {
  position: absolute;
  left: 852px;
  top: 1673px;
  width: 1177px;
  height: 116px;
  border-radius: 26px;
  border: 2px solid rgba(120,95,155,.45);
  background: linear-gradient(to right, rgba(42,28,66,.82), rgba(36,20,66,.85) 50%, rgba(66,22,100,.75));
  box-shadow: 0 -6px 60px 14px rgba(0,0,0,.22);
  display: flex;
  padding: 16px 0 0 13px;
}
.dock-item { width: 76px; margin-right: 22px; display: flex; flex-direction: column; align-items: center; flex: none; }
.ico { width: 76px; height: 76px; display: block; flex: none; }
.spot { overflow: visible; }
.dot { width: 6px; height: 8px; margin-top: 11px; border-radius: 50%; background: #a79cc4; display: block; }
.dock-sep { width: 2px; height: 82px; margin: 1px 33px 0 10px; background: rgba(200,190,220,.4); flex: none; }
.doc { width: 60px; height: 86px; margin-top: -6px; flex: none; }
.trash { width: 68px; height: 88px; margin-top: -8px; flex: none; }
```
